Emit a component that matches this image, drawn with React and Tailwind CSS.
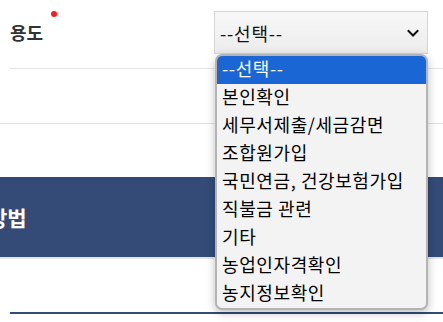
import React from 'react';

const options = [
    '--선택--',
    '본인확인',
    '세무서제출/세금감면',
    '조합원가입',
    '국민연금, 건강보험가입',
    '직불금 관련',
    '기타',
    '농업인자격확인',
    '농지정보확인',
];

const App = () => {
    return (
        <div
            className="relative w-[443px] h-[322px] overflow-hidden bg-white text-[#111]"
            style={{ fontFamily: '"Noto Sans CJK KR", "Noto Sans", sans-serif' }}
        >
            {/* 용도 row */}
            <div className="pl-[10px]">
                <div className="flex items-start justify-between h-[69px] border-b border-[#e6e6e6] pr-[15px]">
                    <div className="relative pt-[20px] text-[18px] font-bold text-[#333] leading-[24px]">
                        용도
                        <span className="absolute left-[41px] top-[11px] w-[6px] h-[6px] rounded-full bg-[#ff1a1a]" />
                    </div>
                    <div className="mt-[11px] w-[214px] h-[43px] flex items-center justify-between border border-[#d6d6d6] bg-gradient-to-b from-[#f8f8f8] to-[#ececec] pl-[5px] pr-[7px]">
                        <span className="text-[18px] tracking-[0.8px] leading-none">--선택--</span>
                        <svg width="14" height="14" viewBox="0 0 14 14" fill="none">
                            <path d="M2.5 5 L7 9.5 L11.5 5" stroke="#111" strokeWidth="2" strokeLinecap="square" />
                        </svg>
                    </div>
                </div>
            </div>

            <div className="h-[55px] border-b border-[#e0e0e0]" />

            {/* 방법 band */}
            <div className="mt-[53px] h-[82px] bg-[#344b78] border-b-2 border-[#e4e6ea] flex items-center">
                <span className="-ml-[12px] text-[21px] font-bold text-white leading-none">방법</span>
            </div>

            <div className="ml-[10px] mt-[53px] h-[2px] bg-[#344b78]" />

            {/* open select list */}
            <div className="absolute left-[215px] top-[54px] w-[213px] rounded-[7px] border-2 border-[#b4b4b4] bg-[#f3f3f3] overflow-hidden shadow-[0_3px_10px_rgba(0,0,0,0.25)]">
                {options.map((opt, i) => (
                    <div
                        key={opt}
                        className={
                            i === 0
                                ? 'h-[28px] pl-[5px] pb-[3px] flex items-center text-[18px] tracking-[0.6px] bg-[#1a66d5] text-white'
                                : 'h-[28px] pl-[5px] pb-[3px] flex items-center text-[18px] tracking-[0.6px] text-black'
                        }
                    >
                        {opt}
                    </div>
                ))}
            </div>
        </div>
    );
};

export default App;
